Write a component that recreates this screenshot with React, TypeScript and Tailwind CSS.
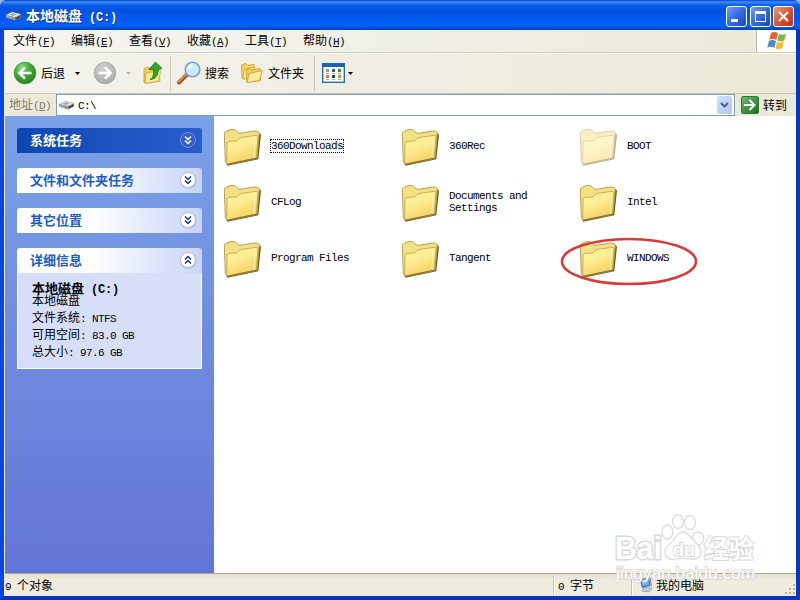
import React from 'react'
import clsx from 'clsx'

const MENUS = [
  { label: '文件', hotkey: 'F' },
  { label: '编辑', hotkey: 'E' },
  { label: '查看', hotkey: 'V' },
  { label: '收藏', hotkey: 'A' },
  { label: '工具', hotkey: 'T' },
  { label: '帮助', hotkey: 'H' },
]

const FOLDERS = [
  { name: '360Downloads', focused: true },
  { name: '360Rec' },
  { name: 'BOOT', hidden: true },
  { name: 'CFLog' },
  { name: 'Documents and Settings' },
  { name: 'Intel' },
  { name: 'Program Files' },
  { name: 'Tangent' },
  { name: 'WINDOWS', circled: true },
]

/** Half-width text, 6px per character (7px when bold) */
const Latin: React.FC<{ children: React.ReactNode; bold?: boolean }> = ({ children, bold }) => (
  <span
    className={clsx(
      "whitespace-pre-wrap font-['Liberation_Mono',monospace]",
      bold ? 'text-[12px] tracking-[-0.2px]' : 'text-[11px] tracking-[-0.6px]',
    )}
  >
    {children}
  </span>
)

const DriveIcon = () => (
  <svg width="16" height="12" viewBox="0 0 16 12" className="shrink-0">
    <path d="M0 5 6 2l9 2v3.500L9 10.500 0 7.500z" fill="#6d6d70" />
    <path d="M0 5 6 2l9 2.200L9 7.200z" fill="#e2e3e6" />
    <path d="M3.500 4.800l3-1.500 4 .9-3.500 1.700z" fill="#a2a4aa" />
    <path d="M0 5.400l9 2.300v2.600L0 7.400z" fill="#a9aaae" />
    <path d="M10 8.600l4-2" stroke="#35363a" strokeWidth="1" />
    <path d="M6 8l2 .6" stroke="#5b8c4e" strokeWidth="1" />
  </svg>
)

const WindowsFlag = () => (
  <svg width="22" height="20" viewBox="0 0 22 20">
    <path d="M5 2q3.500-1.900 7 .3L10.300 9Q7 7 3.300 8.700z" fill="#e8622c" />
    <path d="M13 2.900q3.500 1.700 7-.1L18.300 9.500q-3.500 1.700-7 .1z" fill="#7fb843" />
    <path d="M3 9.800q3.600-1.700 7 .3l-1.700 6.800Q5 15 1.300 16.600z" fill="#4d87d6" />
    <path d="M11 10.700q3.500 1.700 7-.1l-1.700 6.700q-3.500 1.800-7 .1z" fill="#f3bf31" />
  </svg>
)

const RoundArrow: React.FC<{ forward?: boolean }> = ({ forward }) => (
  <svg width="24" height="24" viewBox="0 0 24 24">
    <defs>
      <radialGradient id="back-fill" cx=".35" cy=".25" r=".85">
        <stop offset="0" stopColor="#8ed683" />
        <stop offset=".45" stopColor="#45ac35" />
        <stop offset="1" stopColor="#19801a" />
      </radialGradient>
      <radialGradient id="fwd-fill" cx=".4" cy=".3" r=".8">
        <stop offset="0" stopColor="#d2d2d0" />
        <stop offset="1" stopColor="#a6a6a5" />
      </radialGradient>
    </defs>
    <circle
      cx="12"
      cy="12"
      r="10.8"
      fill={forward ? 'url(#fwd-fill)' : 'url(#back-fill)'}
      stroke={forward ? '#a7a7a5' : '#379137'}
      strokeWidth=".8"
    />
    <path
      d={forward ? 'M5.500 12h11.500M12 6.300l5.700 5.700-5.700 5.700' : 'M18.500 12H7M12 6.300 6.300 12l5.700 5.700'}
      stroke="#fff"
      strokeWidth="2.600"
      fill="none"
    />
  </svg>
)

const UpFolderIcon = () => (
  <svg width="20" height="24" viewBox="0 0 20 24">
    <path d="M1 8l2-1.500 4 .5 1 1.500 8-.5 1 12-14 2.500-2-1z" fill="#f0ce59" stroke="#bc952e" strokeWidth=".7" />
    <path d="M3 12l14.500-2.500L16 20 2 22.500z" fill="#fbe993" stroke="#c59f38" strokeWidth=".7" />
    <path d="M7 18.500c3-1 4-5 3.500-10H6L12.500 1l6.500 6.500-4 .8C15.500 14 12.500 18.500 7 18.500z" fill="#35a72d" stroke="#167018" strokeWidth=".8" />
  </svg>
)

const SearchIcon = () => (
  <svg width="24" height="24" viewBox="0 0 24 24">
    <path d="M2 21.500 10 13.500" stroke="#a8552a" strokeWidth="4" strokeLinecap="round" />
    <path d="M1.800 20.500 9 13.400" stroke="#e79a5c" strokeWidth="1.600" strokeLinecap="round" />
    <circle cx="15.500" cy="8.500" r="7.300" fill="#cdeafb" stroke="#7b9fd8" strokeWidth="1.600" />
    <path d="M10.500 8c.5-3 2.800-4.600 5.500-4.400-1 2.500-2.500 4-5.500 4.400z" fill="#fff" />
  </svg>
)

const FoldersIcon = () => (
  <svg width="24" height="22" viewBox="0 0 24 22" stroke="#c49a2e" strokeWidth=".8" strokeLinejoin="round">
    <path d="M1.500 3 6 1.500 8 3.500l6-1.500.5 11-10 4L2 16z" fill="#f5d567" />
    <path d="M4 7.500 14.500 5l-1 10-10.500 2z" fill="#fdeda0" />
    <path d="M6 8l4-1.500L12 8l8-1.500.5 12L7 20.500z" fill="#f3cf57" />
    <path d="M9 11.500 22.500 8.500 19.500 18.500 7 20.500z" fill="#fdec9a" />
  </svg>
)

const ViewsIcon = () => (
  <svg width="23" height="20" viewBox="0 0 23 20">
    <rect x=".7" y=".7" width="21.600" height="18.600" fill="#fff" stroke="#2b6ba9" strokeWidth="1.400" />
    <rect x="0" y="0" width="23" height="4" fill="#1b62b0" />
    <rect x="4" y="6" width="3" height="3" fill="#8f9ab8" />
    <rect x="10" y="6" width="3" height="3" fill="#3555a5" />
    <rect x="16" y="6" width="3" height="3" fill="#329334" />
    <rect x="4" y="12" width="3" height="3" fill="#e07b4b" />
    <rect x="10" y="12" width="3" height="3" fill="#1f3f78" />
    <rect x="16" y="12" width="3" height="3" fill="#c2982f" />
    <path d="M4 10.500h3m3 0h3m3 0h3M4 16.500h3m3 0h3m3 0h3" stroke="#a9b1bd" />
  </svg>
)

const FolderIcon: React.FC<{ faded?: boolean }> = ({ faded }) => (
  <svg width="38" height="38" viewBox="0 0 114 114" className={clsx('shrink-0', faded && 'opacity-50')}>
    <defs>
      <linearGradient id="folder-front" x1="0" y1="0" x2=".5" y2="1">
        <stop offset="0" stopColor="#fff6a6" />
        <stop offset=".5" stopColor="#fdec90" />
        <stop offset="1" stopColor="#f6cf5e" />
      </linearGradient>
    </defs>
    <path d="M13 113 106 94l8-74-7-7-12 76-84 18z" fill="#6d6127" />
    <path d="M4 17q0-5 6-7l8-4q4-2 16-1 5 1 8 6 3 5 9 5l44-7q12-1 14 6l-7 74L11 108 7 100z" fill="#f5e084" stroke="#ab9140" strokeWidth="2.500" />
    <path d="M11 109 12 46q0-5 5-6l21-1q6 0 9-5 4-5 10-6l42-6q6 0 6 5l-5 61q0 3-4 4z" fill="url(#folder-front)" stroke="#bfa148" strokeWidth="2.500" />
    <path d="M12 109l86-18" stroke="#8b7a31" strokeWidth="4" />
    <path d="M97 26l-4 62" stroke="#fffbd0" strokeWidth="2" />
  </svg>
)

const ComputerIcon = () => (
  <svg width="14" height="16" viewBox="0 0 14 16">
    <path d="M1 2.500 10 0l1.500 8.500-8.500 2.500z" fill="#2470cf" />
    <path d="M2.300 3.300 9.200 1.500l.9 6.200-6.500 1.600z" fill="#6fb6f8" />
    <path d="M10 0l2 1 1 8.500-1.500-1z" fill="#8d96b0" />
    <path d="M4 11.500l6-2 3 2-3 3.500-7-1z" fill="#c3c8d4" stroke="#7f899e" strokeWidth=".6" />
  </svg>
)

const Caret: React.FC<{ disabled?: boolean }> = ({ disabled }) => (
  <svg width="5" height="3" viewBox="0 0 5 3">
    <path d="M0 0h5L2.500 3z" fill={disabled ? '#bdbaaa' : '#000'} />
  </svg>
)

const TitleBar = () => (
  <div className="flex h-[30px] shrink-0 items-center bg-[linear-gradient(180deg,#0a3fc4_0px,#3a8cf8_2px,#0a5fe8_5px,#0253dd_10px,#0258ee_18px,#0463fb_25px,#0352d6_28px,#003dba_30px)] pr-1.5 pl-1.5">
    <div className="pt-0.5">
      <DriveIcon />
    </div>
    <div className="ml-1 flex-1 pt-0.5 text-[14px] leading-5 font-bold whitespace-pre text-white [text-shadow:1px_1px_#0b2f8c]">
      本地磁盘<Latin bold> (C:)</Latin>
    </div>
    <div className="flex gap-0.5 pt-[3px]">
      <div className="size-[21px] rounded-[3px] border border-white bg-linear-to-br from-[#6f9cf5] via-[#3469e3] to-[#1c48c0]">
        <div className="mt-[12px] ml-1 h-[3px] w-[7px] bg-white" />
      </div>
      <div className="ml-px flex size-[21px] items-center justify-center rounded-[3px] border border-white bg-linear-to-br from-[#6f9cf5] via-[#3469e3] to-[#1c48c0]">
        <div className="size-[11px] border border-t-[3px] border-white" />
      </div>
      <div className="flex size-[21px] items-center justify-center rounded-[3px] border border-white bg-linear-to-br from-[#f0987c] via-[#dd5432] to-[#b5341a]">
        <svg width="11" height="11" viewBox="0 0 11 11">
          <path d="M1 1l9 9M10 1 1 10" stroke="#fff" strokeWidth="2.200" />
        </svg>
      </div>
    </div>
  </div>
)

const MenuBar = () => (
  <div className="flex h-[23px] shrink-0 border-b border-[#d0cdbc] bg-linear-to-r from-[#f5f5f1] to-[#ece9d8]">
    <div className="flex flex-1 items-center gap-4 pl-2">
      {MENUS.map((m) => (
        <span key={m.hotkey} className="w-[42px] whitespace-nowrap">
          {m.label}
          <Latin>
            (<u>{m.hotkey}</u>)
          </Latin>
        </span>
      ))}
    </div>
    <div className="flex w-[40px] items-center justify-center border-l border-[#bab7a7] bg-white">
      <WindowsFlag />
    </div>
  </div>
)

const Toolbar = () => (
  <div className="flex h-[41px] shrink-0 items-center border-t border-b border-t-white border-b-[#c9c6b6] bg-linear-to-r from-[#f3f2ec] to-[#ece9d8] pb-px pl-2">
    <RoundArrow />
    <span className="-mt-px ml-1 w-6 whitespace-nowrap">后退</span>
    <div className="ml-[10px]">
      <Caret />
    </div>
    <div className="ml-[13px]">
      <RoundArrow forward />
    </div>
    <div className="ml-[9px]">
      <Caret disabled />
    </div>
    <div className="ml-3">
      <UpFolderIcon />
    </div>
    <div className="ml-[7px] h-[35px] w-px bg-[#c9c6b6]" />
    <div className="ml-[6px]">
      <SearchIcon />
    </div>
    <span className="-mt-px ml-[4px] w-6 whitespace-nowrap">搜索</span>
    <div className="ml-[11px]">
      <FoldersIcon />
    </div>
    <span className="-mt-px ml-1 w-9 whitespace-nowrap">文件夹</span>
    <div className="ml-[10px] h-[35px] w-px bg-[#c9c6b6]" />
    <div className="ml-[7px]">
      <ViewsIcon />
    </div>
    <div className="ml-[3px]">
      <Caret />
    </div>
  </div>
)

const AddressBar = () => (
  <div className="flex h-[22px] shrink-0 items-center bg-[#ece9d8] pr-2 pl-1">
    <span className="w-[47px] pb-px whitespace-nowrap text-[#7f7d72]">
      地址
      <Latin>
        (<u>D</u>)
      </Latin>
    </span>
    <div className="flex h-[22px] flex-1 items-center border border-[#7f9db9] bg-white pr-0.5 pl-0.5">
      <DriveIcon />
      <span className="ml-[3px] flex-1">
        <Latin>C:\</Latin>
      </span>
      <div className="flex h-[18px] w-[15px] items-center justify-center rounded-[2px] bg-linear-to-br from-[#d3e0fd] to-[#afc5f5]">
        <svg width="9" height="6" viewBox="0 0 9 6">
          <path d="M1 1l3.500 3.500L8 1" stroke="#4d6185" strokeWidth="2" fill="none" />
        </svg>
      </div>
    </div>
    <div className="ml-1.5 flex size-[18px] items-center justify-center rounded-[2px] border border-[#2c7a31] bg-linear-to-br from-[#6fb86b] to-[#14701a]">
      <svg width="14" height="14" viewBox="0 0 14 14">
        <path d="M1 7h10M6.500 2l5 5-5 5" stroke="#fff" strokeWidth="2" fill="none" />
      </svg>
    </div>
    <span className="ml-1 w-[25px] pb-px whitespace-nowrap">转到</span>
  </div>
)

interface PanelProps {
  title: string
  primary?: boolean
  open?: boolean
  children?: React.ReactNode
}

const Panel: React.FC<PanelProps> = ({ title, primary, open, children }) => (
  <section>
    <div
      className={clsx(
        'flex h-[25px] items-center justify-between rounded-t-[3px] pr-[5px] pl-[13px]',
        primary ? 'bg-linear-to-r from-[#0b48b5] to-[#2a5ccd]' : 'bg-linear-to-r from-white from-40% to-[#c8d4f7]',
      )}
    >
      <h2 className={clsx('pb-0.5 text-[13px] leading-none font-bold', primary ? 'text-white' : 'text-[#215dc6]')}>
        {title}
      </h2>
      <svg width="18" height="18" viewBox="0 0 18 18" className="-mt-0.5">
        <circle cx="9.500" cy="9.800" r="8" fill={primary ? '#1a429b' : '#9ba9cf'} opacity=".6" />
        <circle cx="9" cy="9" r="7.500" fill={primary ? '#315fc5' : '#fff'} stroke={primary ? '#7499e5' : '#b6c0dd'} />
        <path
          d={open ? 'M6 8.500l3-3 3 3M6 12.500l3-3 3 3' : 'M6 5.500l3 3 3-3M6 9.500l3 3 3-3'}
          stroke={primary ? '#fff' : '#1c3578'}
          strokeWidth="1.500"
          fill="none"
        />
      </svg>
    </div>
    {children}
  </section>
)

const Sidebar = () => (
  <aside className="flex w-[209px] shrink-0 flex-col gap-[15px] bg-linear-to-b from-[#7ba2e7] to-[#6375d6] pt-3 pr-3 pl-3">
    <Panel title="系统任务" primary />
    <Panel title="文件和文件夹任务" />
    <Panel title="其它位置" />
    <Panel title="详细信息" open>
      <div className="h-24 border border-t-0 border-white bg-[#d6dff7] pt-[9px] pl-[14px] leading-[15px] whitespace-nowrap">
        <div className="h-3 text-[13px] leading-3 font-bold whitespace-pre">
          本地磁盘<Latin bold> (C:)</Latin>
        </div>
        <div className="h-[15px] leading-3">本地磁盘</div>
        <div className="h-[17px]">文件系统<Latin>: NTFS</Latin></div>
        <div className="h-[17px]">可用空间<Latin>: 83.0 GB</Latin></div>
        <div className="h-[17px]">总大小<Latin>: 97.6 GB</Latin></div>
      </div>
    </Panel>
  </aside>
)

const Watermark = () => (
  <svg width="150" height="72" viewBox="0 0 150 72" className="absolute right-[36px] bottom-[-13px] z-10">
    <g fill="#fff" stroke="#dcdcdc" strokeWidth="1.300">
      <ellipse cx="57.500" cy="18" rx="5.500" ry="7" />
      <ellipse cx="68" cy="7.500" rx="5.500" ry="7" />
      <ellipse cx="80" cy="8.500" rx="5.500" ry="7" />
      <ellipse cx="88" cy="24.500" rx="5.800" ry="6.500" />
      <path d="M73 18c5 0 8 5 11 9 4 4 7 6 7 11 0 6-5 8-10 7-6-1-10-1-16 0-5 1-10-1-10-7s4-7 8-11c3-4 5-9 10-9z" />
    </g>
    <g className="font-['Liberation_Sans',sans-serif] font-bold [paint-order:stroke]" fill="#fff" stroke="#d9d9d9" strokeWidth="3">
      <text x="5" y="45" fontSize="31" textLength="47" lengthAdjust="spacingAndGlyphs">Bai</text>
      <text x="63" y="42" fontSize="19" textLength="22" lengthAdjust="spacingAndGlyphs" strokeWidth="2">du</text>
      <text x="94" y="44" fontSize="25" textLength="50" strokeWidth="2" className="font-['Noto_Sans_CJK_SC',sans-serif]">
        经验
      </text>
    </g>
    <text
      x="6"
      y="65"
      fontSize="17"
      textLength="139"
      lengthAdjust="spacingAndGlyphs"
      fill="#fff"
      stroke="#d4d3cf"
      strokeWidth="1.400"
      className="font-['Liberation_Sans',sans-serif] [paint-order:stroke]"
    >
      jingyan.baidu.com
    </text>
  </svg>
)

const FileList = () => (
  <main className="relative min-w-0 flex-1 bg-white pt-3 pl-[9px]">
    <div className="grid w-[534px] grid-cols-3">
      {FOLDERS.map((f) => (
        <div key={f.name} className="relative flex h-14 items-start">
          <FolderIcon faded={f.hidden} />
          <div className="ml-[9px] flex h-[35px] w-[100px] items-center text-[11px] leading-3">
            <span className={clsx('border border-dotted', f.focused ? 'border-black' : 'border-transparent')}>
              <span className="block font-['Liberation_Mono',monospace] tracking-[-0.6px]">{f.name}</span>
            </span>
          </div>
          {f.circled && (
            <svg width="138" height="50" viewBox="0 0 138 50" className="absolute top-[-4px] left-[-19px]">
              <ellipse cx="69" cy="25.500" rx="67" ry="22.500" fill="none" stroke="#d83a3a" strokeWidth="2.600" />
            </svg>
          )}
        </div>
      ))}
    </div>
    <Watermark />
  </main>
)

const StatusBar = () => (
  <div className="flex h-[23px] shrink-0 items-center border-t border-[#aca899] bg-linear-to-b from-[#e4e1d0] to-[#efecdf] to-30%">
    <span className="flex-1 pt-px">
      <Latin>9 </Latin>个对象
    </span>
    <span className="h-[19px] w-[78px] border-l border-[#c5c2b2] pl-1 leading-[18px] shadow-[inset_1px_0_#fff]">
      <Latin>0 </Latin>字节
    </span>
    <div className="flex h-[19px] w-[165px] items-center border-l border-[#c5c2b2] pl-[7px] shadow-[inset_1px_0_#fff]">
      <ComputerIcon />
      <span className="ml-[3px] flex-1 whitespace-nowrap">我的电脑</span>
      <svg width="12" height="12" viewBox="0 0 12 12" className="self-end">
        <path d="M9 1h2v2H9zM5 5h2v2H5zM9 5h2v2H9zM1 9h2v2H1zM5 9h2v2H5zM9 9h2v2H9z" fill="#b8b4a2" />
      </svg>
    </div>
  </div>
)

export default function App() {
  return (
    <div className="h-[600px] w-[800px] bg-[#9bb0d8]">
      <div className="flex h-full flex-col overflow-hidden rounded-t-[7px] bg-[#0a46dd] font-['Noto_Sans_CJK_SC',sans-serif] text-[12px] leading-4 text-black">
        <TitleBar />
        <div className="flex min-h-0 flex-1 flex-col border-x-4 border-b-4 border-r-[#0638c4] border-b-[#0735bd] border-l-[#0a46dd] bg-[#ece9d8] pl-px">
          <MenuBar />
          <Toolbar />
          <AddressBar />
          <div className="flex min-h-0 flex-1">
            <Sidebar />
            <FileList />
          </div>
          <StatusBar />
        </div>
      </div>
    </div>
  )
}
